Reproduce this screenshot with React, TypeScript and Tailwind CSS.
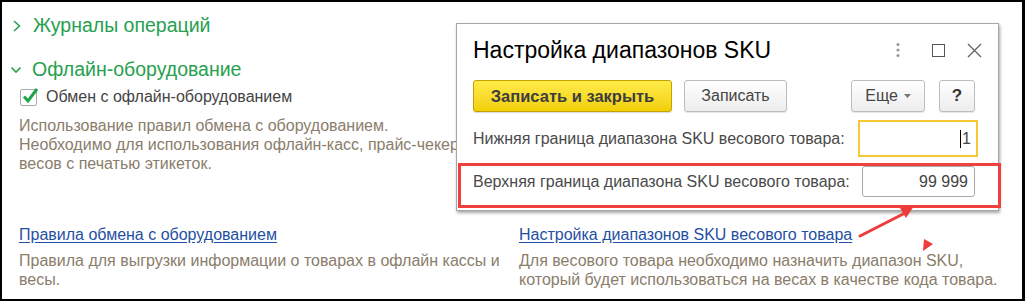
import React from 'react';

function ChevronRight() {
  return (
    <svg width="10" height="14" viewBox="0 0 10 14" className="shrink-0">
      <path d="M2 2l5.5 5L2 12" fill="none" stroke="#27a04f" strokeWidth="1.6" />
    </svg>
  );
}

function ChevronDown() {
  return (
    <svg width="12" height="10" viewBox="0 0 12 10" className="shrink-0">
      <path d="M1.5 2.5l4.5 4.5 4.5-4.5" fill="none" stroke="#27a04f" strokeWidth="1.6" />
    </svg>
  );
}

function Checkbox() {
  return (
    <div className="relative w-[17px] h-[17px] rounded-[2px] border border-[#a9a9a9] bg-white shrink-0">
      <svg width="20" height="20" viewBox="0 0 20 20" className="absolute left-[-1px] top-[-4px]">
        <path d="M4 10.5l4 4.5L17 3" fill="none" stroke="#1fa34a" strokeWidth="3" />
      </svg>
    </div>
  );
}

export default function App() {
  return (
    <div className="relative w-[1025px] h-[301px] overflow-hidden bg-white border-t-2 border-l-2 border-b-2 border-r-[3px] border-black font-['Liberation_Sans',Arial,sans-serif]">
      {/* Left settings list */}
      <div className="pt-[11px]">
        <div className="flex items-center h-[26px] pl-[10px]">
          <ChevronRight />
          <span className="ml-[11px] text-[19.5px] text-[#27a04f] leading-none">Журналы операций</span>
        </div>
        <div className="flex items-center h-[26px] mt-[18px] pl-[8px]">
          <ChevronDown />
          <span className="ml-[10px] text-[19.5px] text-[#27a04f] leading-none">Офлайн-оборудование</span>
        </div>
        <div className="flex items-center h-[20px] mt-[4px] pl-[18px]">
          <Checkbox />
          <span className="ml-[9px] text-[16px] text-[#444]">Обмен с офлайн-оборудованием</span>
        </div>
        <div className="mt-[9px] pl-[17px] text-[16px] leading-[19px] text-[#8a7d6b] whitespace-nowrap">
          <div>Использование правил обмена с оборудованием.</div>
          <div>Необходимо для использования офлайн-касс, прайс-чекеров и</div>
          <div>весов с печатью этикеток.</div>
        </div>

        <div className="flex mt-[52px]">
          <div className="w-[517px] pl-[17px] shrink-0">
            <div className="text-[16px] leading-[19px] text-[#1f4fa3] underline underline-offset-2">Правила обмена с оборудованием</div>
            <div className="mt-[7px] text-[16px] leading-[19px] text-[#8a7d6b] whitespace-nowrap">
              <div>Правила для выгрузки информации о товарах в офлайн кассы и</div>
              <div>весы.</div>
            </div>
          </div>
          <div>
            <div className="text-[16px] leading-[19px] text-[#1f4fa3] underline underline-offset-2">Настройка диапазонов SKU весового товара</div>
            <div className="mt-[7px] text-[16px] leading-[19px] text-[#8a7d6b] whitespace-nowrap">
              <div>Для весового товара необходимо назначить диапазон SKU,</div>
              <div>который будет использоваться на весах в качестве кода товара.</div>
            </div>
          </div>
        </div>
      </div>

      {/* Dialog window */}
      <div className="absolute left-[454px] top-[21px] w-[543px] h-[188px] bg-white border border-[#a6a6a6] shadow-[1px_2px_3px_rgba(0,0,0,0.35)]">
        <div className="flex items-center h-[52px] pl-[16px] pr-[16px]">
          <span className="text-[23px] text-black">Настройка диапазонов SKU</span>
          <div className="ml-auto flex items-center">
            <svg width="6" height="16" viewBox="0 0 6 16" className="mr-[31px]">
              <circle cx="3" cy="2.5" r="1.6" fill="#9a9a9a" />
              <circle cx="3" cy="8" r="1.6" fill="#9a9a9a" />
              <circle cx="3" cy="13.5" r="1.6" fill="#9a9a9a" />
            </svg>
            <div className="w-[13px] h-[13px] border-[1.5px] border-[#555] mr-[22px]" />
            <svg width="15" height="15" viewBox="0 0 15 15">
              <path d="M1 1l13 13M14 1L1 14" stroke="#666" strokeWidth="1.4" />
            </svg>
          </div>
        </div>

        <div className="flex items-center h-[32px] mt-[4px] pl-[16px] pr-[23px]">
          <button className="h-[32px] w-[199px] rounded-[3px] border border-[#c4a300] bg-gradient-to-b from-[#ffec45] to-[#f2cf00] text-[16.5px] font-bold text-[#3d3d3d] shadow-[0_1px_1px_rgba(0,0,0,0.15)]">
            Записать и закрыть
          </button>
          <button className="ml-[12px] h-[32px] w-[103px] rounded-[3px] border border-[#bdbdbd] bg-gradient-to-b from-white to-[#ededed] text-[16px] text-[#444] shadow-[0_1px_1px_rgba(0,0,0,0.1)]">
            Записать
          </button>
          <button className="ml-auto h-[32px] w-[74px] rounded-[3px] border border-[#bdbdbd] bg-gradient-to-b from-white to-[#ededed] text-[16px] text-[#444] flex items-center justify-center gap-[6px] shadow-[0_1px_1px_rgba(0,0,0,0.1)]">
            Еще
            <svg width="7" height="4" viewBox="0 0 7 4">
              <path d="M0 0h7L3.5 4z" fill="#777" />
            </svg>
          </button>
          <button className="ml-[14px] h-[32px] w-[36px] rounded-[3px] border border-[#bdbdbd] bg-gradient-to-b from-white to-[#ededed] text-[17px] font-bold text-[#333] shadow-[0_1px_1px_rgba(0,0,0,0.1)]">
            ?
          </button>
        </div>

        <div className="flex items-center h-[37px] mt-[8px] pl-[16px] pr-[20px]">
          <span className="text-[16px] text-[#4a4a4a]">Нижняя граница диапазона SKU весового товара:</span>
          <div className="ml-auto w-[120px] h-[37px] border-2 border-[#f6c832] bg-white flex items-center justify-end pr-[5px]">
            <span className="w-px h-[18px] bg-black mr-px" />
            <span className="text-[16px] text-[#444]">1</span>
          </div>
        </div>

        <div className="flex items-center h-[31px] mt-[9px] pl-[16px] pr-[23px]">
          <span className="text-[16px] text-[#4a4a4a]">Верхняя граница диапазона SKU весового товара:</span>
          <div className="ml-auto w-[113px] h-[31px] rounded-[3px] border border-[#a9a9a9] bg-white flex items-center justify-end pr-[6px]">
            <span className="text-[16px] text-[#444]">99 999</span>
          </div>
        </div>
      </div>

      {/* Red highlight and callout arrow */}
      <div className="absolute left-[456px] top-[161px] w-[543px] h-[45px] border-[3px] border-[#ef3f3f]" />
      <svg className="absolute left-0 top-0" width="1020" height="297" viewBox="0 0 1020 297">
        <path d="M858 234L905 210" stroke="#ee3b3b" strokeWidth="3" strokeLinecap="round" />
        <path d="M912 204l-14 2 6 10z" fill="#ee3b3b" />
        <path d="M922 237l-1 12 10-7z" fill="#ee3b3b" />
      </svg>
    </div>
  );
}
